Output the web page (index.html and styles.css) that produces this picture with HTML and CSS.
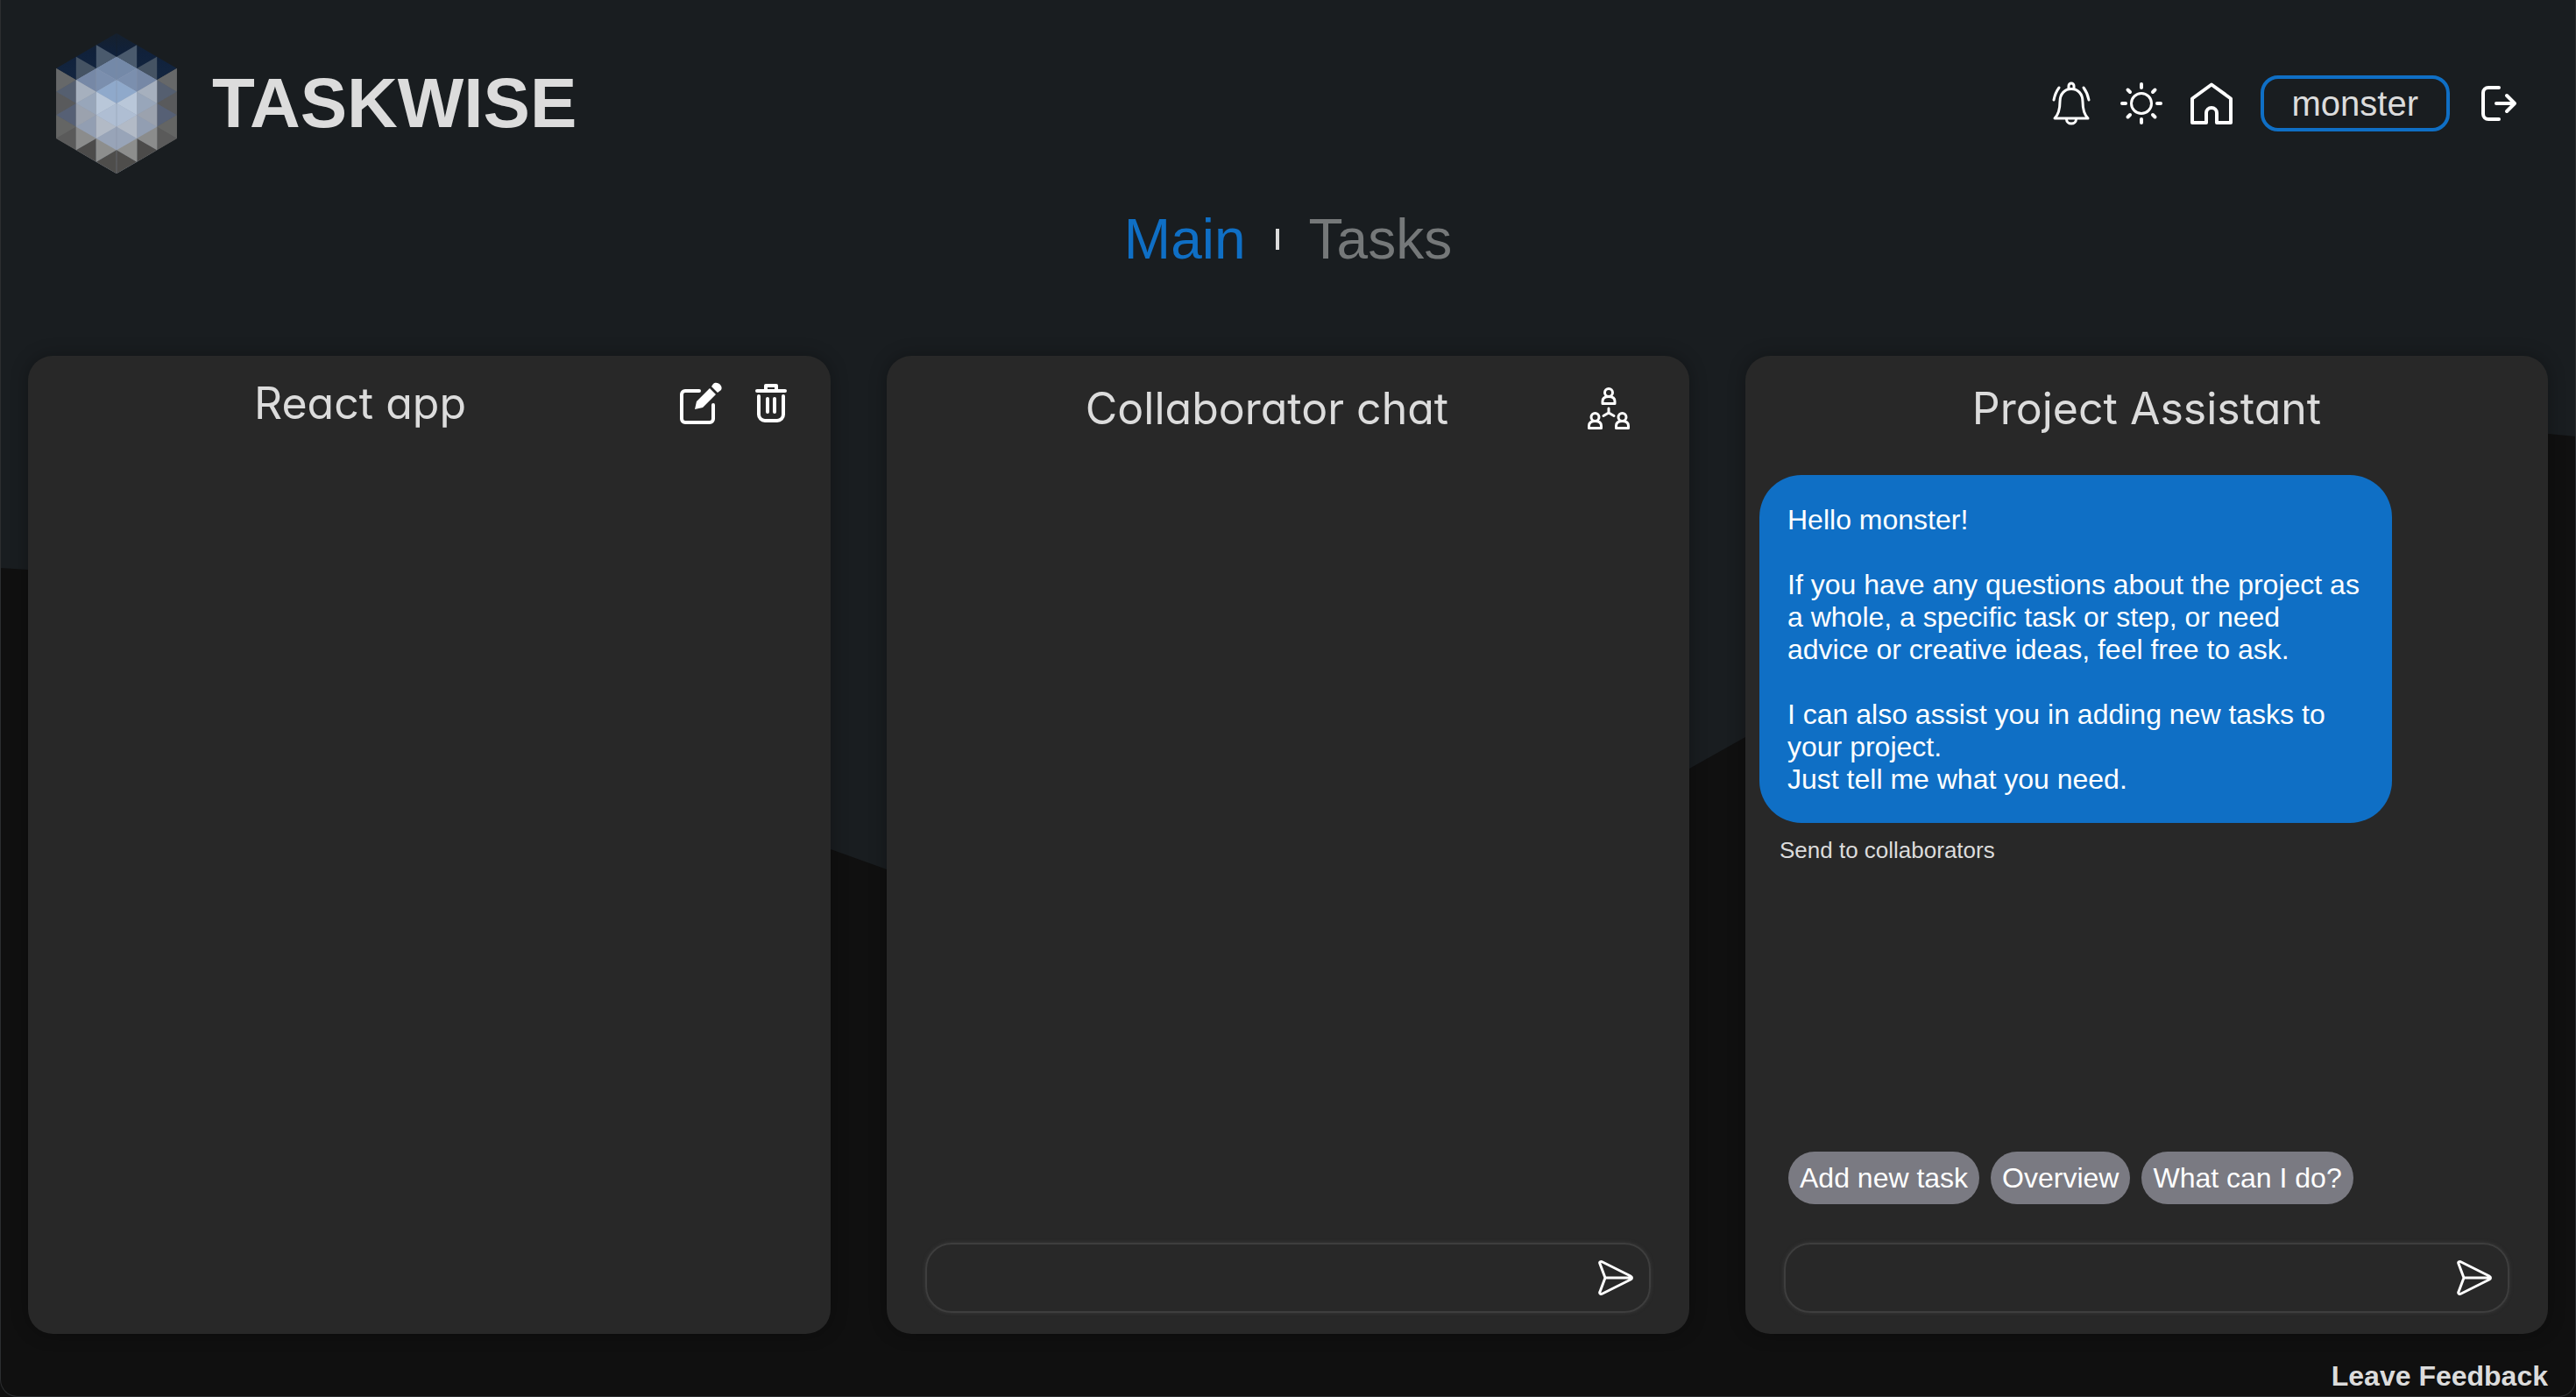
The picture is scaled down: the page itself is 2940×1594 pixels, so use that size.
FILE: index.html
```html
<!DOCTYPE html>
<html lang="en">
<head>
<meta charset="utf-8">
<meta name="viewport" content="width=device-width, initial-scale=1">
<title>Taskwise</title>
<link rel="stylesheet" href="styles.css">
</head>
<body>
<svg class="backdrop" viewBox="0 0 2940 1594" preserveAspectRatio="none" aria-hidden="true">
  <path fill="#191d20" d="M0 0H2940V498L2908 495C2650 460 2300 665 1992 841L1928 877C1800 945 1650 1050 1470 1060C1250 1060 1100 1024 1012 992L948 969C650 860 300 660 32 650L0 648Z"/>
</svg>
<div class="page">
  <header class="topbar">
    <a class="brand" href="#">
      <svg class="brand-mark" viewBox="43 10 413 480" aria-hidden="true">
        <defs>
          <linearGradient id="cap" gradientUnits="userSpaceOnUse" x1="0" y1="10" x2="0" y2="150">
            <stop offset="0" stop-color="#15202e"/>
            <stop offset="0.500" stop-color="#10213b"/>
            <stop offset="1" stop-color="#13253f"/>
          </linearGradient>
        </defs>
        <g id="half">
          <path fill="url(#cap)" d="M249 10L43 130L111 170L249 90Z"/>
          <path fill="#5c5d5e" d="M43 130L111 170V410L43 370Z"/>
          <path fill="#666869" d="M43 130V210L111 170Z"/>
          <path fill="#555f70" d="M111 170V250L43 210Z"/>
          <path fill="#595a5c" d="M43 210V290L111 250Z"/>
          <path fill="#566075" d="M111 250V330L43 290Z"/>
          <path fill="#646564" d="M43 290V370L111 330Z"/>
          <path fill="#5a5a5a" d="M111 330V410L43 370Z"/>
          <path fill="#9299a5" d="M111 170L180 130V450L111 410Z"/>
          <path fill="#455363" d="M111 90V170L180 130Z"/>
          <path fill="#7688a6" d="M180 130V210L111 170Z"/>
          <path fill="#a6b0be" d="M111 170V250L180 210Z"/>
          <path fill="#98a6ba" d="M180 210V290L111 250Z"/>
          <path fill="#9ba2ae" d="M111 250V330L180 290Z"/>
          <path fill="#929eb2" d="M180 290V370L111 330Z"/>
          <path fill="#8b8c8c" d="M111 330V410L180 370Z"/>
          <path fill="#4c4b4a" d="M180 370V450L111 410Z"/>
          <path fill="#9ba7b9" d="M180 130L249 90V490L180 450Z"/>
          <path fill="#4a5a6d" d="M180 50V130L249 90Z"/>
          <path fill="#7489a8" d="M249 90V170L180 130Z"/>
          <path fill="#7b8fae" d="M180 130V210L249 170Z"/>
          <path fill="#8fa9cb" d="M249 170V250L180 210Z"/>
          <path fill="#b9c7d9" d="M180 210V290L249 250Z"/>
          <path fill="#afbed3" d="M249 250V330L180 290Z"/>
          <path fill="#b2bac6" d="M180 290V370L249 330Z"/>
          <path fill="#98a4b8" d="M249 330V410L180 370Z"/>
          <path fill="#8d8e8d" d="M180 370V450L249 410Z"/>
          <path fill="#4e4d4b" d="M249 410V490L180 450Z"/>
        </g>
        <use href="#half" transform="translate(499 0) scale(-1 1)"/>
      </svg>
      <span>TASKWISE</span>
    </a>
    <div class="actions">
      <button class="icon-button" type="button" aria-label="Notifications">
        <svg class="icon" viewBox="0 0 48 48" stroke-width="3">
          <path d="M5 41H43C39 37 37 31 37 22C37 13 31.500 7.500 24 7.500S11 13 11 22C11 31 9 37 5 41Z"/>
          <path d="M21 7V4a3 3 0 0 1 6 0V7M18.500 42a5.500 5 0 0 0 11 0M10 6C7 10 5 15 4 20M38 6C41 10 43 15 44 20"/>
        </svg>
      </button>
      <button class="icon-button" type="button" aria-label="Switch theme">
        <svg class="icon" viewBox="0 0 48 48" stroke-width="3">
          <circle cx="24" cy="24" r="11.500"/>
          <path stroke-width="4" d="M24 2V6M24 42V46M2 24H6M42 24H46M8.500 8.500L11 11M37 37L39.500 39.500M8.500 39.500L11 37M37 11L39.500 8.500"/>
        </svg>
      </button>
      <button class="icon-button" type="button" aria-label="Home">
        <svg class="icon" viewBox="0 0 48 48" stroke-width="4">
          <path d="M2 18.500L24 2.500L46 18.500V46H30V35a6 6 0 0 0-12 0V46H2Z"/>
        </svg>
      </button>
      <button class="user-button" type="button">monster</button>
      <button class="icon-button" type="button" aria-label="Log out">
        <svg class="icon" viewBox="0 0 48 48" stroke-width="4">
          <path d="M24 6H12a6 6 0 0 0-6 6V36a6 6 0 0 0 6 6H24M21 24H42M33 15L42 24L33 33"/>
        </svg>
      </button>
    </div>
  </header>

  <nav class="tabs" aria-label="Project views">
    <a class="tab tab-active" href="#main" aria-current="page">Main</a>
    <span class="tab-divider"></span>
    <a class="tab" href="#tasks">Tasks</a>
  </nav>

  <main class="panels">
    <section class="panel">
      <div class="panel-head panel-head-tools">
        <h2 class="panel-title">React app</h2>
        <div class="tools">
          <button class="icon-button" type="button" aria-label="Edit project">
            <svg class="icon" viewBox="0 0 48 48" stroke-width="4">
              <path d="M22 10H6a4 4 0 0 0-4 4V42a4 4 0 0 0 4 4H34a4 4 0 0 0 4-4V26"/>
              <path class="solid" d="M17 31L19 22L34 7L41 14L26 29ZM36 5L38 2C42-2 50 4 47 9L43 12Z"/>
            </svg>
          </button>
          <button class="icon-button" type="button" aria-label="Delete project">
            <svg class="icon" viewBox="0 0 48 48" stroke-width="4">
              <path d="M8 10H40M18 9V4H30V9M10 16V37a7 7 0 0 0 7 7H31a7 7 0 0 0 7-7V16M20 19V34M28 19V34"/>
            </svg>
          </button>
        </div>
      </div>
    </section>

    <section class="panel">
      <div class="panel-head">
        <h2 class="panel-title">Collaborator chat</h2>
        <button class="icon-button" type="button" aria-label="Collaborators">
          <svg class="icon" viewBox="0 0 48 48" stroke-width="3">
            <g id="person">
              <circle cx="24" cy="6" r="4.500"/>
              <path d="M17 18.500V16C17 12 20 10.500 24 10.500S31 12 31 16V18.500Z"/>
            </g>
            <use href="#person" x="-15.500" y="28"/>
            <use href="#person" x="15.500" y="28"/>
            <path d="M24 24V29L18 32.500M24 29L30 32.500"/>
          </svg>
        </button>
      </div>
      <form class="composer">
        <input class="composer-input" type="text" aria-label="Message collaborators">
        <button class="send-button" type="button" aria-label="Send message">
          <svg class="icon" viewBox="0 0 40 40" stroke-width="3">
            <path d="M8 20L2 4C1 2 3 1 5 2L37 18C39 19 39 21 37 22L5 38C3 39 1 38 2 36ZH38"/>
          </svg>
        </button>
      </form>
    </section>

    <section class="panel">
      <div class="panel-head">
        <h2 class="panel-title">Project Assistant</h2>
      </div>
      <div class="messages">
        <div class="bubble">
          <p>Hello monster!</p>
          <p>If you have any questions about the project as a whole, a specific task or step, or need advice or creative ideas, feel free to ask.</p>
          <p>I can also assist you in adding new tasks to your project.<br>Just tell me what you need.</p>
        </div>
        <button class="share-button" type="button">Send to collaborators</button>
      </div>
      <div class="chips">
        <button class="chip" type="button">Add new task</button>
        <button class="chip" type="button">Overview</button>
        <button class="chip" type="button">What can I do?</button>
      </div>
      <form class="composer">
        <input class="composer-input" type="text" aria-label="Message the assistant">
        <button class="send-button" type="button" aria-label="Send to assistant">
          <svg class="icon" viewBox="0 0 40 40" stroke-width="3">
            <path d="M8 20L2 4C1 2 3 1 5 2L37 18C39 19 39 21 37 22L5 38C3 39 1 38 2 36ZH38"/>
          </svg>
        </button>
      </form>
    </section>
  </main>

  <footer class="footer">
    <a class="feedback" href="#feedback">Leave Feedback</a>
  </footer>
</div>
</body>
</html>
```
FILE: styles.css
```css
* {
  box-sizing: border-box;
}

body {
  margin: 0;
  background: #101010;
  color: #dcdcdc;
  font-family: "Liberation Sans", Arial, sans-serif;
  font-size: 32px;
}

button {
  margin: 0;
  padding: 0;
  border: 0;
  background: none;
  color: inherit;
  font: inherit;
  cursor: pointer;
}

a {
  color: inherit;
  text-decoration: none;
}

/* Curved two-tone backdrop behind the whole page */
.backdrop {
  position: absolute;
  inset: 0;
  width: 100%;
  height: 100%;
  z-index: -1;
}

.page {
  display: flex;
  flex-direction: column;
  min-height: 100vh;
  border: solid #2c2e30;
  border-width: 0 1px 1px;
  border-radius: 0 0 20px 20px;
}

.topbar {
  display: flex;
  align-items: center;
  justify-content: space-between;
  padding: 38px 63px;
}

.brand {
  display: flex;
  align-items: center;
  gap: 40px;
  font-size: 80px;
  font-weight: bold;
}

.brand-mark {
  width: 138px;
  height: 160px;
}

.actions {
  display: flex;
  align-items: center;
  gap: 32px;
}

.icon-button {
  flex: none;
  width: 48px;
  height: 48px;
}

.icon {
  display: block;
  width: 100%;
  height: 100%;
  overflow: visible;
  fill: none;
  stroke: #fff;
  stroke-linecap: round;
  stroke-linejoin: round;
}

.icon .solid {
  fill: #fff;
  stroke: none;
}

.user-button {
  height: 64px;
  padding: 0 32px;
  border: 4px solid #0f6fc5;
  border-radius: 20px;
  font-size: 40px;
}

.tabs {
  display: flex;
  align-items: center;
  justify-content: center;
  gap: 34px;
  font-size: 64px;
  line-height: 74px;
}

.tab {
  color: #757879;
}

.tab-active {
  color: #0f6fc5;
}

.tab-divider {
  width: 4px;
  height: 24px;
  background: #dcdcdc;
}

.panels {
  display: grid;
  flex: 1;
  grid-template-columns: repeat(3, minmax(0, 1fr));
  gap: 64px;
  padding: 96px 31px 0;
}

.panel {
  display: flex;
  flex-direction: column;
  padding: 24px 0;
  border-radius: 28px;
  background: #282828;
  box-shadow: 0 0 20px rgba(0, 0, 0, 0.3);
}

.panel-head {
  display: flex;
  align-items: center;
  padding: 0 68px;
}

.panel-head-tools {
  margin-top: -6px;
  padding: 0 44px 0 14px;
}

.panel-title {
  flex: 1;
  margin: 0;
  font-family: Inter, sans-serif;
  font-size: 50px;
  font-weight: 400;
  line-height: 72px;
  font-feature-settings: "cv11";
  text-align: center;
}

.tools {
  display: flex;
  gap: 32px;
}

.messages {
  flex: 1;
  padding: 40px 16px 0;
}

.bubble {
  width: 722px;
  max-width: 100%;
  padding: 33px 32px 31px;
  border-radius: 48px;
  background: #0f6fc5;
  color: #fff;
  line-height: 37px;
}

.bubble p {
  margin: 0 0 37px;
}

.bubble p:last-child {
  margin-bottom: 0;
}

.share-button {
  display: block;
  margin: 16px 23px 0;
  font-size: 26px;
  line-height: 30px;
}

.chips {
  display: flex;
  gap: 13px;
  padding: 0 49px 44px;
}

.chip {
  height: 60px;
  padding: 0 13px;
  border-radius: 30px;
  background: #7a7a82;
  color: #fff;
}

.composer {
  display: flex;
  align-items: center;
  height: 80px;
  margin: auto 44px 0;
  padding-right: 18px;
  border: 2px solid #3e3e3e;
  border-radius: 30px;
  box-shadow: 0 0 4px #3a3a3a;
}

.composer-input {
  flex: 1;
  min-width: 0;
  height: 100%;
  padding: 0 24px;
  border: 0;
  outline: 0;
  background: none;
  color: inherit;
  font: inherit;
}

.send-button {
  flex: none;
  width: 40px;
  height: 40px;
}

.footer {
  display: flex;
  justify-content: flex-end;
  padding: 30px 31px 5px;
}

.feedback {
  font-weight: bold;
  line-height: 36px;
}
```
